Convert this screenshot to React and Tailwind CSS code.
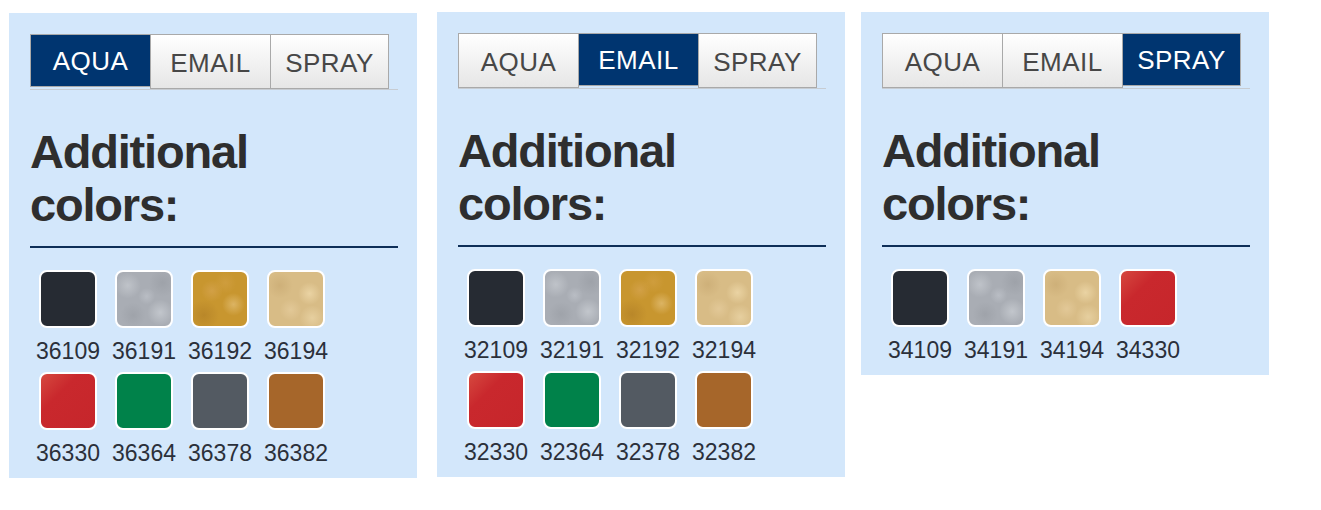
import React from "react";

const swatch = {
  black: "bg-[#262b33]",
  silver:
    "bg-[#a9adb4] bg-[radial-gradient(circle_at_20%_25%,#bfc3c9_0%,transparent_22%),radial-gradient(circle_at_55%_45%,#b9bdc4_0%,transparent_20%),radial-gradient(circle_at_80%_75%,#c2c6cc_0%,transparent_22%),radial-gradient(circle_at_30%_80%,#9fa3aa_0%,transparent_22%),radial-gradient(circle_at_85%_20%,#9ea2a9_0%,transparent_22%)]",
  gold:
    "bg-[#c8962f] bg-[radial-gradient(circle_at_75%_60%,#dcb463_0%,transparent_22%),radial-gradient(circle_at_35%_35%,#d2a046_0%,transparent_22%),radial-gradient(circle_at_20%_80%,#b98729_0%,transparent_25%),radial-gradient(circle_at_60%_20%,#cf9d3d_0%,transparent_20%)]",
  champagne:
    "bg-[#d8bc86] bg-[radial-gradient(circle_at_75%_40%,#ead3a3_0%,transparent_22%),radial-gradient(circle_at_40%_70%,#e2c897_0%,transparent_22%),radial-gradient(circle_at_20%_25%,#ceb079_0%,transparent_22%),radial-gradient(circle_at_80%_85%,#e6cf9f_0%,transparent_20%)]",
  red: "bg-[#c9282d] bg-[linear-gradient(135deg,#d6493f_0%,#c9282d_35%,#c6262b_100%)]",
  green: "bg-[#00824a]",
  gray: "bg-[#535a62]",
  brown: "bg-[#a6662a]",
};

const panels = [
  {
    active: "AQUA",
    margin: "ml-[9px] mt-[13px]",
    colors: [
      ["36109", swatch.black],
      ["36191", swatch.silver],
      ["36192", swatch.gold],
      ["36194", swatch.champagne],
      ["36330", swatch.red],
      ["36364", swatch.green],
      ["36378", swatch.gray],
      ["36382", swatch.brown],
    ],
  },
  {
    active: "EMAIL",
    margin: "ml-[20px] mt-[12px]",
    colors: [
      ["32109", swatch.black],
      ["32191", swatch.silver],
      ["32192", swatch.gold],
      ["32194", swatch.champagne],
      ["32330", swatch.red],
      ["32364", swatch.green],
      ["32378", swatch.gray],
      ["32382", swatch.brown],
    ],
  },
  {
    active: "SPRAY",
    margin: "ml-[16px] mt-[12px]",
    colors: [
      ["34109", swatch.black],
      ["34191", swatch.silver],
      ["34194", swatch.champagne],
      ["34330", swatch.red],
    ],
  },
];

const tabs = [
  { name: "AQUA", width: "w-[121px]" },
  { name: "EMAIL", width: "w-[121px]" },
  { name: "SPRAY", width: "w-[119px]" },
];

function Panel({ panel }) {
  return (
    <div
      className={`w-[408px] bg-[#d3e7fb] pl-[21px] pr-[19px] pt-[21px] pb-[12px] ${panel.margin}`}
    >
      {/* Tabs */}
      <div className="flex items-start border-b border-[#c7ccd2]">
        {tabs.map((t, i) => {
          const on = t.name === panel.active;
          return (
            <div
              key={t.name}
              className={`${t.width} flex items-center justify-center border border-[#a9a9a9] text-[26px] tracking-[0.5px] ${
                i > 0 ? "-ml-px" : ""
              } ${
                on
                  ? "h-[53px] pt-[1px] bg-[#003570] text-white relative z-10 border-[#8c97a6]"
                  : "h-[55px] pt-[3px] bg-gradient-to-b from-white to-[#e6e6e6] text-[#474747]"
              }`}
            >
              {t.name}
            </div>
          );
        })}
      </div>

      {/* Heading */}
      <h2 className="mt-[35px] text-[47px] leading-[53px] font-bold tracking-[-1.2px] text-[#2e2e2e]">
        Additional
        <br />
        colors:
      </h2>

      <div className="mt-[15px] h-[2px] bg-[#0e2f58]" />

      {/* Swatches */}
      <div className="mt-[22px] grid grid-cols-[repeat(4,76px)] gap-y-[8px]">
        {panel.colors.map(([code, cls]) => (
          <div key={code} className="flex flex-col items-center">
            <div
              className={`w-[58px] h-[58px] rounded-[8px] border-2 border-white ${cls}`}
            />
            <p className="mt-[10px] text-[23px] leading-[26px] text-[#2b303a]">
              {code}
            </p>
          </div>
        ))}
      </div>
    </div>
  );
}

export default function App() {
  return (
    <div className="w-[1321px] h-[510px] bg-white flex items-start font-['Liberation_Sans',Arial,sans-serif]">
      {panels.map((p) => (
        <Panel key={p.active} panel={p} />
      ))}
    </div>
  );
}
